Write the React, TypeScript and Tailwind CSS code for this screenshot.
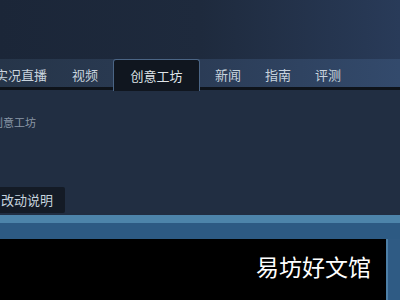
import React from "react";

const navItems = [
  { name: "实况直播", w: "w-[77px]" },
  { name: "视频", w: "w-[41px]" },
  { name: "创意工坊", w: "w-[87px]", active: true },
  { name: "新闻", w: "w-[50px] ml-[15px]" },
  { name: "指南", w: "w-[50px]" },
  { name: "评测", w: "w-[50px]" },
];

const App = () => {
  return (
    <div
      className="relative w-[400px] h-[300px] overflow-hidden bg-[#212e42] flex flex-col"
      style={{ fontFamily: '"Noto Sans CJK SC", "Noto Sans", sans-serif' }}
    >
      {/* Header */}
      <div className="h-[59px] shrink-0 bg-gradient-to-r from-[#1b2638] via-[#1e2a3d] to-[#293b59]" />

      {/* Nav */}
      <div className="relative h-[31px] shrink-0 bg-gradient-to-r from-[#263549] via-[#2b3c56] to-[#334a6c] border-b-[3px] border-[#0e131a]">
        <ul className="flex flex-row items-stretch h-full ml-[-5px]">
          {navItems.map(({ name, w, active }, idx) => (
            <li
              key={idx}
              className={
                active
                  ? `${w} flex justify-center items-center pt-[1px] mb-[-4px] bg-[#10161f] border border-b-0 border-[#4b6585] rounded-t-[3px] text-[13px] text-[#dfe4e8]`
                  : `${w} flex justify-start items-center pt-[3px] text-[13px] text-[#c9d4de]`
              }
            >
              {name}
            </li>
          ))}
        </ul>
      </div>

      {/* Content */}
      <div className="h-[125px] shrink-0 flex flex-col">
        <div className="mt-[24px] ml-[-8px] text-[11px] text-[#8a97a7]">创意工坊</div>
        <div className="mt-auto mb-[2px] w-[65px] h-[26px] bg-[#141b26] flex items-center pl-[1px] text-[13px] text-[#c6d3de] rounded-r-[2px]">
          改动说明
        </div>
      </div>

      {/* Blue bars */}
      <div className="h-[8px] shrink-0 bg-[#4d84aa]" />
      <div className="h-[16px] shrink-0 bg-[#2d5a83]" />

      {/* Bottom */}
      <div className="flex-1 flex flex-row">
        <div className="w-[386px] bg-black flex items-start justify-end pr-[15px] pt-[11px]">
          <span className="text-[23px] leading-[32px] text-white">易坊好文馆</span>
        </div>
        <div className="w-[2px] bg-[#4d7fa6]" />
        <div className="flex-1 bg-[#2f5b84]" />
      </div>
    </div>
  );
};

export default App;
